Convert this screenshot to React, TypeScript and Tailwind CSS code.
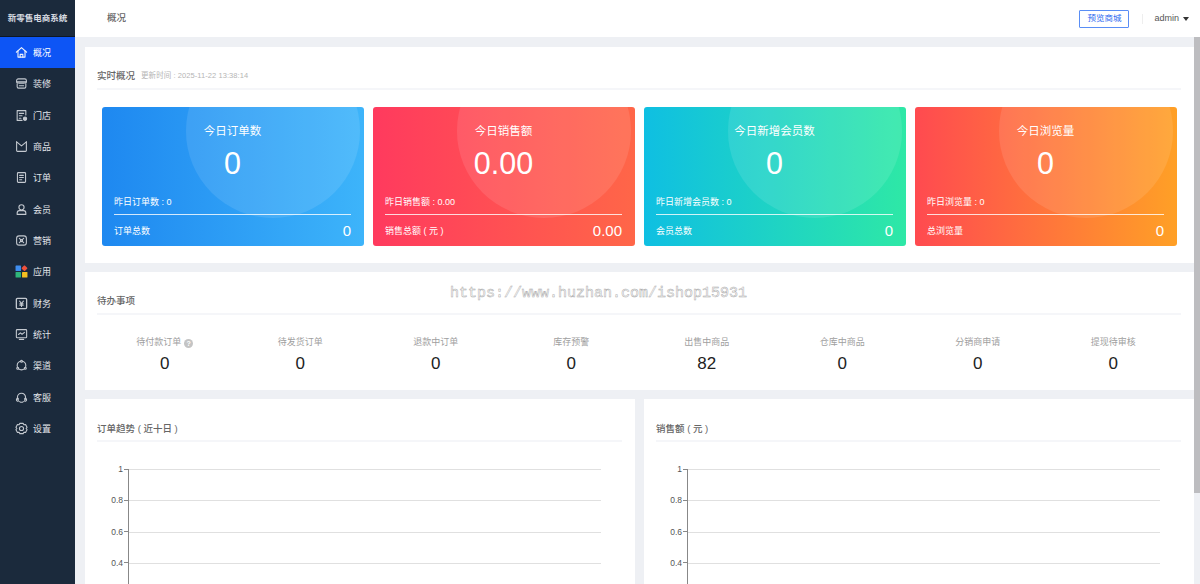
import React from "react";

const FONT = "[font-family:'Liberation_Sans','Noto_Sans_CJK_SC',sans-serif]";

const S = (p: { children: React.ReactNode; light?: boolean }) => (
  <svg width="13" height="13" viewBox="0 0 24 24" fill="none" stroke={p.light ? "#f2f5fa" : "#c4c9d0"} strokeWidth="2" strokeLinecap="round" strokeLinejoin="round">
    {p.children}
  </svg>
);

const menu: { label: string; icon: React.ReactNode; active?: boolean }[] = [
  { label: "概况", active: true, icon: <S light><path d="M2.500 11.500 12 3l9.500 8.500" /><path d="M5.500 9.500v11h13v-11" /><path d="M9.500 20.500v-5h5v5" /></S> },
  { label: "装修", icon: <S><path d="M6 3.500h12a3 3 0 0 1 3 3v2.500H3V6.500a3 3 0 0 1 3-3z" /><path d="M3 9c0 3 18 3 18 0" /><path d="M4 12v6a2.500 2.500 0 0 0 2.500 2.500h11A2.500 2.500 0 0 0 20 18v-6" /><path d="M8 16h8" /></S> },
  { label: "门店", icon: <S><path d="M20 11V3H4v18h9" /><path d="M8 8h8M8 12.500h5M8 17h3" /><circle cx="18.500" cy="18" r="3" fill="#c4c9d0" /></S> },
  { label: "商品", icon: <S><path d="M3 3.500v16a1.500 1.500 0 0 0 1.500 1.500h15a1.500 1.500 0 0 0 1.500-1.500v-16" /><path d="M3 3.500 12 11l9-7.500" /></S> },
  { label: "订单", icon: <S><rect x="4.500" y="3" width="15" height="18" rx="1.500" /><path d="M8.500 8h7M8.500 12h7M8.500 16h4" /></S> },
  { label: "会员", icon: <S><circle cx="12" cy="8" r="4.800" /><path d="M4 21v-2.500c0-2.500 2-4.500 4-4.500h8c2 0 4 2 4 4.500V21z" /></S> },
  { label: "营销", icon: <S><rect x="3" y="3.500" width="18" height="17" rx="4.500" /><path d="m8 8 3 3M16 8l-3 3M8 16l3-3M16 16l-3-3" /><circle cx="12" cy="12" r="2" /></S> },
  {
    label: "应用",
    icon: (
      <svg width="13" height="13" viewBox="0 0 24 24">
        <rect x="1" y="1" width="10" height="10" rx="1" fill="#3f8ef0" />
        <rect x="13.500" y="2" width="8" height="8" rx="1" fill="#f0503c" transform="rotate(45 17.500 6)" />
        <rect x="1" y="13" width="10" height="10" rx="1" fill="#2fb67a" />
        <rect x="13" y="13" width="10" height="10" rx="1" fill="#f5c020" />
      </svg>
    ),
  },
  { label: "财务", icon: <S><rect x="2.500" y="2.500" width="19" height="19" rx="2" strokeWidth="2.400" /><path d="M8.500 7.500 12 12l3.500-4.500M12 12v5.500M9 12.500h6M9 15h6" /></S> },
  { label: "统计", icon: <S><rect x="2.500" y="3" width="19" height="15" rx="1.500" /><path d="M8 21h8" /><path d="m6.500 12 3.500-3 3 2.500 4.500-3.500" /></S> },
  { label: "渠道", icon: <S><circle cx="12" cy="12" r="8" /><circle cx="12" cy="4" r="1.800" fill="#1b2a3c" /><circle cx="5" cy="17" r="1.800" fill="#1b2a3c" /><circle cx="19" cy="17" r="1.800" fill="#1b2a3c" /></S> },
  { label: "客服", icon: <S><path d="M4.500 15v-3.500a7.500 7.500 0 0 1 15 0V15" /><path d="M4.500 13.500c-2.500.5-2.500 5 0 5.500h1.500v-5.500zM19.500 13.500c2.500.5 2.500 5 0 5.500H18v-5.500z" /><path d="M8.500 19.500c2 1.500 5 1.500 7 0" /></S> },
  { label: "设置", icon: <S><path d="M9 2.500h6l1.500 2.500 3-.2 2.700 5-1.700 2.200 1.700 2.200-2.700 5-3-.2L15 21.500H9L7.500 19l-3 .2-2.700-5L3.500 12 1.800 9.800l2.700-5 3 .2z" /><circle cx="12" cy="12" r="3.800" /></S> },
];

const cards = [
  { title: "今日订单数", value: "0", yLabel: "昨日订单数 : 0", totalLabel: "订单总数", total: "0", bg: "bg-[linear-gradient(90deg,#1e88f0,#3db4fa)]" },
  { title: "今日销售额", value: "0.00", yLabel: "昨日销售额 : 0.00", totalLabel: "销售总额 ( 元 )", total: "0.00", bg: "bg-[linear-gradient(90deg,#ff3a5e,#ff6648)]" },
  { title: "今日新增会员数", value: "0", yLabel: "昨日新增会员数 : 0", totalLabel: "会员总数", total: "0", bg: "bg-[linear-gradient(90deg,#0fbfe2,#2ee8a6)]" },
  { title: "今日浏览量", value: "0", yLabel: "昨日浏览量 : 0", totalLabel: "总浏览量", total: "0", bg: "bg-[linear-gradient(90deg,#ff4a50,#ffa026)]" },
];

const todos = [
  ["待付款订单", "0"],
  ["待发货订单", "0"],
  ["退款中订单", "0"],
  ["库存预警", "0"],
  ["出售中商品", "82"],
  ["仓库中商品", "0"],
  ["分销商申请", "0"],
  ["提现待审核", "0"],
];

function Chart({ title }: { title: string }) {
  const ticks = ["1", "0.8", "0.6", "0.4"];
  return (
    <div className="flex-1 bg-white h-[185px] overflow-hidden pl-3 pr-[13px]">
      <div className="h-[43px] pt-[23px] border-b-2 border-[#f5f6f9] text-[9.500px] leading-[13px] font-medium text-[#666]">{title}</div>
      <div className="pt-[27px] pl-[15px] pr-[21px]">
        <div className="border-l-[1.500px] border-[#888] ml-[16px]">
          {ticks.map((t) => (
            <div key={t} className="relative h-[31.300px] border-t-[1.500px] border-[#e0e0e0]">
              <span className="absolute -left-[5px] -top-[1.500px] w-[4px] h-px bg-[#888]" />
              <span className="absolute right-full mr-[6px] -top-[6px] text-[8.500px] leading-[10px] text-[#555]">{t}</span>
            </div>
          ))}
        </div>
      </div>
    </div>
  );
}

export default function App() {
  return (
    <div className={`${FONT} flex w-[1200px] h-[584px] overflow-hidden bg-[#eef0f4]`}>
      <aside className="w-[75px] shrink-0 bg-[#1b2a3c]">
        <div className="h-[37px] flex items-center justify-center text-[8.500px] font-semibold text-[#d8dce2] border-b border-[#0e1824] whitespace-nowrap">新零售电商系统</div>
        {menu.map((m) => (
          <div key={m.label} className={`h-[31.330px] flex items-center pl-[15px] gap-[5px] text-[9px] text-[#e2e5ea] ${m.active ? "bg-[#0d55f5] text-white" : ""}`}>
            {m.icon}
            <span className="pt-[2px]">{m.label}</span>
          </div>
        ))}
      </aside>
      <div className="flex-1 flex flex-col min-w-0">
        <header className="h-[37px] shrink-0 bg-white flex items-center pl-[32px] pr-[11px] text-[9.500px]">
          <span className="text-[#666] flex-1 font-medium">概况</span>
          <span className="w-[50px] h-[18px] flex items-center justify-center border border-[#5a8ef5] rounded-[1px] text-[8.500px] text-[#2f6bf0]">预览商城</span>
          <span className="w-px h-[10px] bg-[#eee] ml-[13px] mr-[11px]" />
          <span className="text-[#555] text-[9px]">admin</span>
          <span className="ml-[4px] w-0 h-0 border-x-[3.500px] border-x-transparent border-t-[4px] border-t-[#333]" />
        </header>
        <div className="flex-1 flex min-h-0">
          <main className="relative flex-1 min-w-0 pt-[10px] pl-[10px] flex flex-col gap-[9px] overflow-hidden">
            <section className="bg-white h-[216px] shrink-0 pl-3 pr-[13px]">
              <div className="h-[43px] border-b-2 border-[#f5f6f9] flex items-center pb-[8px] pt-[23px] gap-[6px] leading-[13px]">
                <span className="text-[9.500px] font-medium text-[#666]">实时概况</span>
                <span className="text-[7.500px] tracking-[0.07px] text-[#b5b5b5]">更新时间 : 2025-11-22 13:38:14</span>
              </div>
              <div className="flex gap-[9px] pl-[5px] pt-[17px]">
                {cards.map((c) => (
                  <div key={c.title} className={`${c.bg} relative overflow-hidden w-[262px] h-[139px] shrink-0 rounded-[3px] text-white`}>
                    <div className="absolute left-[84px] -top-[63px] w-[174px] h-[174px] rounded-full bg-white/10" />
                    <div className="relative h-full flex flex-col pl-3 pr-[13px]">
                      <div className="pt-[16px] text-center text-[11.500px] leading-[16px]">{c.title}</div>
                      <div className="mt-[6px] text-center text-[30.500px] leading-[36px]">{c.value}</div>
                      <div className="mt-[15px] text-[9px] leading-[12px]">{c.yLabel}</div>
                      <div className="mt-[6px] border-t border-white/80 flex items-center justify-between h-[34px] pt-[1px]">
                        <span className="text-[9px] pt-[1px]">{c.totalLabel}</span>
                        <span className="text-[15px]">{c.total}</span>
                      </div>
                    </div>
                  </div>
                ))}
              </div>
            </section>
            <section className="bg-white h-[118px] shrink-0 pl-3 pr-[13px]">
              <div className="h-[43px] pt-[22px] border-b-2 border-[#f5f6f9] text-[9.500px] leading-[13px] font-medium text-[#666]">待办事项</div>
              <div className="flex pt-[21px]">
                {todos.map(([l, v], i) => (
                  <div key={l} className="w-[135.500px] text-center">
                    <div className="h-[14px] flex items-center justify-center gap-[3px] text-[9px] text-[#a0a0a0]">
                      {l}
                      {i === 0 && <span className="w-[9px] h-[9px] rounded-full bg-[#c4c4c4] text-white text-[7px] leading-[9px] font-bold">?</span>}
                    </div>
                    <div className="mt-[4px] text-[17px] leading-[20px] text-[#222]">{v}</div>
                  </div>
                ))}
              </div>
            </section>
            <div className="flex gap-[9px] shrink-0">
              <Chart title="订单趋势 ( 近十日 )" />
              <Chart title="销售额 ( 元 )" />
            </div>
            <div className="absolute left-[375px] top-[247px] font-['Liberation_Mono'] text-[15px] leading-[20px] text-white [-webkit-text-stroke:0.5px_#aaa] whitespace-nowrap">https://www.huzhan.com/ishop15931</div>
          </main>
          <div className="w-[6px] shrink-0 bg-[#eef0f4]">
            <div className="h-[456px] bg-[#bdbdc0]" />
          </div>
        </div>
      </div>
    </div>
  );
}
